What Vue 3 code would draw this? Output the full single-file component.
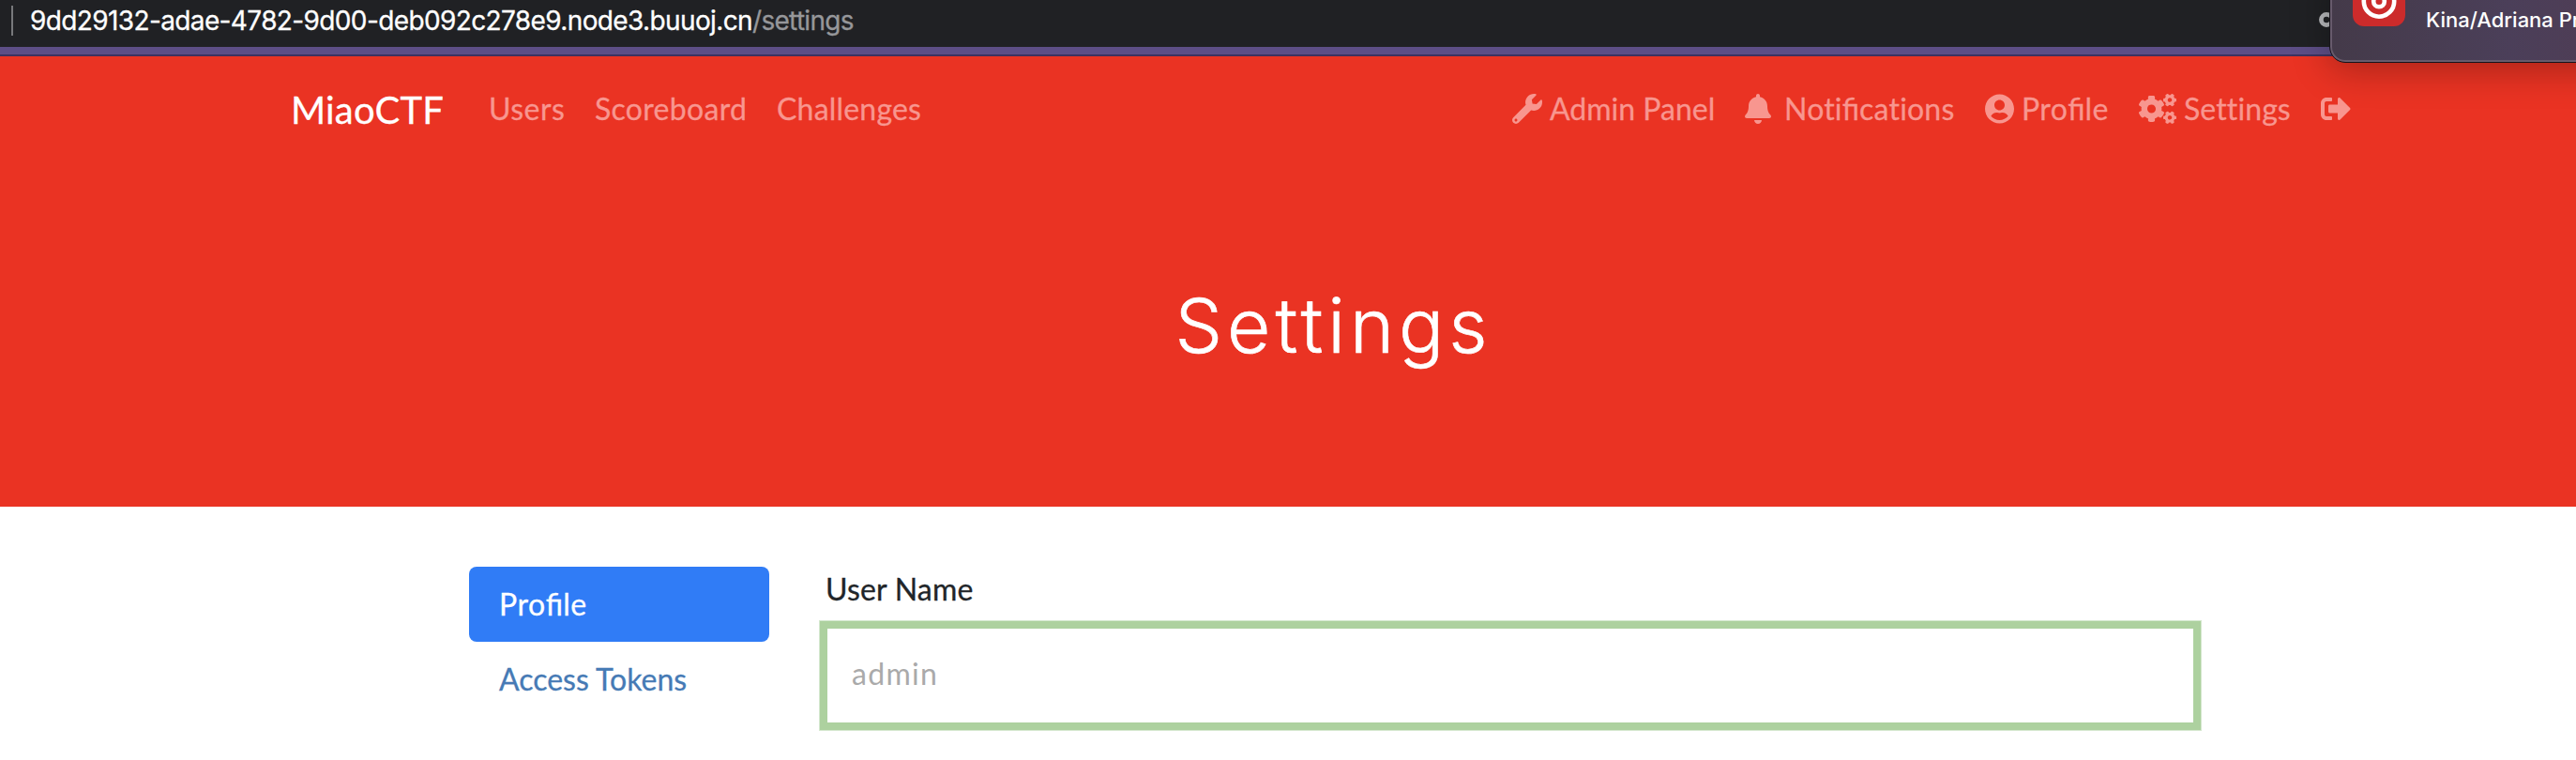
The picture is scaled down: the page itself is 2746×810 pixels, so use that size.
<script setup>
const leftLinks = ['Users', 'Scoreboard', 'Challenges']
</script>

<template>
  <div class="page">
    <div class="address">
      <span class="divider"></span>
      <span class="host">9dd29132-adae-4782-9d00-deb092c278e9.node3.buuoj.cn</span><span class="path">/settings</span>
      <svg class="key" width="30" height="30" viewBox="0 0 30 30"><circle cx="10" cy="10" r="5.600" fill="none" stroke="#b9babd" stroke-width="4.700" /></svg>
    </div>
    <div class="strip"></div>

    <header class="hero">
      <nav class="navbar">
        <a class="brand">MiaoCTF</a>
        <a v-for="l in leftLinks" :key="l" class="link" :class="l.toLowerCase()">{{ l }}</a>
        <span class="grow"></span>
        <a class="link admin">
          <svg width="32" height="32" viewBox="0 0 512 512"><path d="M507.73 109.1c-2.24-9.03-13.54-12.09-20.12-5.51l-74.36 74.36-67.88-11.31-11.31-67.88 74.36-74.36c6.62-6.62 3.43-17.9-5.66-20.16-47.38-11.74-99.55.91-136.58 37.93-39.64 39.64-50.55 97.1-34.05 147.2L18.74 402.76c-24.99 24.99-24.99 65.51 0 90.5 24.99 24.99 65.51 24.99 90.5 0l213.21-213.21c50.12 16.71 107.47 5.68 147.37-34.22 37.07-37.07 49.7-89.32 37.91-136.73zM64 472c-13.25 0-24-10.75-24-24 0-13.26 10.75-24 24-24s24 10.74 24 24c0 13.25-10.75 24-24 24z" /></svg>
          <span>Admin Panel</span>
        </a>
        <a class="link notifications">
          <svg width="28" height="32" viewBox="0 0 448 512"><path d="M224 512c35.32 0 63.97-28.65 63.97-64H160.03c0 35.35 28.65 64 63.97 64zm215.39-149.71c-19.32-20.76-55.47-51.99-55.47-154.29 0-77.7-54.48-139.9-127.94-155.16V32c0-17.67-14.32-32-31.98-32s-31.98 14.33-31.98 32v20.84C118.56 68.1 64.08 130.3 64.08 208c0 102.3-36.15 133.53-55.47 154.29-6 6.45-8.66 14.16-8.61 21.71.11 16.4 12.98 32 32.1 32h383.8c19.12 0 32-15.6 32.1-32 .05-7.55-2.61-15.27-8.61-21.71z" /></svg>
          <span>Noti<span class="lig">fi</span>cations</span>
        </a>
        <a class="link profile">
          <svg width="31" height="32" viewBox="0 0 496 512"><path d="M248 8C111 8 0 119 0 256s111 248 248 248 248-111 248-248S385 8 248 8zm0 96c48.6 0 88 39.4 88 88s-39.4 88-88 88-88-39.4-88-88 39.4-88 88-88zm0 344c-58.7 0-111.3-26.6-146.5-68.2 18.8-35.4 55.6-59.8 98.5-59.8 2.4 0 4.800.4 7.100 1.100 13 4.200 26.600 6.900 40.900 6.900 14.300 0 28-2.700 40.900-6.900 2.300-.7 4.700-1.100 7.100-1.100 42.900 0 79.700 24.400 98.500 59.800C359.300 421.400 306.700 448 248 448z" /></svg>
          <span>Pro<span class="lig">fi</span>le</span>
        </a>
        <a class="link settings">
          <svg width="40" height="32" viewBox="0 0 640 512"><path d="M512.1 191l-8.200 14.300c-3 5.300-9.400 7.500-15.100 5.400-11.800-4.400-22.600-10.700-32.100-18.600-4.600-3.800-5.800-10.500-2.800-15.700l8.200-14.300c-6.900-8-12.300-17.300-15.900-27.400h-16.500c-6 0-11.200-4.300-12.200-10.300-2-12-2.100-24.600 0-37.100 1-6 6.200-10.400 12.200-10.400h16.500c3.600-10.100 9-19.400 15.900-27.400l-8.200-14.300c-3-5.200-1.900-11.900 2.800-15.700 9.500-7.900 20.400-14.200 32.100-18.600 5.700-2.100 12.100.1 15.100 5.400l8.200 14.300c10.500-1.900 21.200-1.900 31.700 0L552 6.300c3-5.300 9.400-7.500 15.100-5.400 11.800 4.400 22.600 10.700 32.100 18.600 4.600 3.800 5.800 10.500 2.800 15.700l-8.200 14.300c6.900 8 12.300 17.300 15.900 27.400h16.500c6 0 11.200 4.300 12.200 10.300 2 12 2.100 24.600 0 37.100-1 6-6.200 10.400-12.200 10.400h-16.500c-3.600 10.100-9 19.400-15.900 27.400l8.200 14.300c3 5.200 1.900 11.900-2.800 15.700-9.500 7.900-20.400 14.200-32.100 18.600-5.700 2.100-12.100-.1-15.100-5.400l-8.200-14.300c-10.400 1.900-21.200 1.900-31.700 0zm-10.500-58.800c38.500 29.600 82.400-14.300 52.800-52.800-38.500-29.700-82.400 14.300-52.800 52.800zM386.300 286.100l33.700 16.800c10.100 5.800 14.500 18.100 10.500 29.100-8.900 24.200-26.400 46.400-42.600 65.800-7.400 8.900-20.200 11.100-30.300 5.300l-29.100-16.800c-16 13.700-34.600 24.600-54.900 31.700v33.600c0 11.600-8.300 21.600-19.700 23.600-24.600 4.200-50.400 4.400-75.900 0-11.500-2-20-11.900-20-23.600V418c-20.300-7.200-38.900-18-54.900-31.700L74 403c-10 5.800-22.900 3.600-30.300-5.300-16.200-19.400-33.300-41.600-42.200-65.700-4-10.900.4-23.200 10.500-29.100l33.300-16.800c-3.900-20.900-3.900-42.400 0-63.400L12 205.800c-10.100-5.800-14.600-18.100-10.500-29 8.900-24.200 26-46.400 42.200-65.800 7.400-8.900 20.200-11.100 30.300-5.300l29.100 16.800c16-13.700 34.600-24.600 54.900-31.700V57.100c0-11.500 8.200-21.500 19.600-23.500 24.600-4.200 50.500-4.400 76-.1 11.500 2 20 11.900 20 23.600v33.600c20.300 7.200 38.900 18 54.900 31.700l29.100-16.800c10-5.800 22.900-3.600 30.300 5.300 16.200 19.400 33.200 41.600 42.100 65.800 4 10.900.1 23.200-10 29.100l-33.700 16.800c3.900 21 3.900 42.500 0 63.500zm-117.600 21.100c59.200-77-28.700-164.900-105.700-105.700-59.200 77 28.700 164.900 105.700 105.700zm243.400 182.700l-8.200 14.300c-3 5.300-9.400 7.500-15.100 5.400-11.800-4.400-22.600-10.700-32.100-18.600-4.600-3.800-5.800-10.500-2.800-15.700l8.200-14.300c-6.900-8-12.300-17.300-15.900-27.400h-16.500c-6 0-11.200-4.300-12.200-10.300-2-12-2.100-24.600 0-37.100 1-6 6.200-10.400 12.200-10.400h16.500c3.600-10.100 9-19.400 15.900-27.400l-8.200-14.300c-3-5.200-1.900-11.900 2.800-15.700 9.500-7.900 20.400-14.200 32.100-18.600 5.700-2.100 12.100.1 15.100 5.400l8.200 14.300c10.500-1.900 21.200-1.900 31.700 0l8.200-14.300c3-5.300 9.400-7.500 15.100-5.400 11.800 4.400 22.600 10.700 32.100 18.600 4.600 3.800 5.800 10.500 2.800 15.700l-8.200 14.300c6.900 8 12.300 17.300 15.900 27.400h16.500c6 0 11.200 4.300 12.200 10.300 2 12 2.100 24.600 0 37.100-1 6-6.200 10.400-12.200 10.400h-16.500c-3.600 10.100-9 19.400-15.900 27.400l8.200 14.300c3 5.200 1.900 11.900-2.800 15.700-9.500 7.900-20.400 14.200-32.100 18.600-5.700 2.100-12.100-.1-15.100-5.400l-8.200-14.300c-10.400 1.900-21.200 1.900-31.700 0zM501.600 431c38.500 29.600 82.400-14.300 52.800-52.800-38.500-29.600-82.400 14.300-52.800 52.800z" /></svg>
          <span>Settings</span>
        </a>
        <a class="link logout">
          <svg width="32" height="32" viewBox="0 0 512 512"><path d="M497 273L329 441c-15 15-41 4.500-41-17v-96H152c-13.300 0-24-10.700-24-24v-96c0-13.300 10.700-24 24-24h136V88c0-21.400 25.900-32 41-17l168 168c9.300 9.400 9.300 24.600 0 34zM192 436v-40c0-6.600-5.400-12-12-12H96c-17.700 0-32-14.300-32-32V160c0-17.700 14.300-32 32-32h84c6.600 0 12-5.400 12-12V76c0-6.600-5.400-12-12-12H96c-53 0-96 43-96 96v192c0 53 43 96 96 96h84c6.600 0 12-5.400 12-12z" /></svg>
        </a>
      </nav>
      <h1>Settings</h1>
    </header>

    <main class="content">
      <aside class="pills">
        <a class="pill active">Pro<span class="lig">fi</span>le</a>
        <a class="pill tokens">Access Tokens</a>
      </aside>
      <form class="form">
        <label>User Name</label>
        <div class="field"><span>admin</span></div>
      </form>
    </main>

    <div class="toast">
      <svg class="app" width="56" height="40" viewBox="0 0 56 40">
        <rect x="0" y="-16" width="56" height="56" rx="12" fill="#cc2b2b" />
        <g fill="none" stroke="#fff" stroke-width="4.600"><circle cx="28" cy="13.500" r="16.200" /><circle cx="28" cy="13.500" r="5.800" /></g>
      </svg>
      <span class="msg">Kina/Adriana Pr</span>
    </div>
  </div>
</template>

<style>
body { margin: 0; background: #fff; }
</style>

<style scoped>
.page { position: relative; width: 2746px; height: 810px; overflow: hidden; background: #fff; font-family: Lato, sans-serif; font-size: 32px; line-height: 48px; letter-spacing: .2px; font-variant-ligatures: none; -webkit-text-stroke: .3px currentColor; }
.lig { font-variant-ligatures: normal; font-feature-settings: "liga" 1; letter-spacing: 0; }
.address { height: 50px; background: #202124; display: flex; align-items: flex-start; font-family: Inter, sans-serif; font-size: 28px; line-height: 44px; letter-spacing: -.62px; color: #fff; white-space: nowrap; }
.divider { width: 2px; height: 32px; margin: 6px 18px 0 12px; background: #77787b; }
.path { color: #96979a; letter-spacing: -.7px; }
.key { margin: 11px 0 0 auto; padding-right: 246px; box-sizing: content-box; }
.strip { height: 8px; background: #5d4e86; border-bottom: 2px solid #3d3260; }
.hero { height: 480px; background: #ea3323; display: flex; flex-direction: column; }
.navbar { display: flex; align-items: center; height: 112px; padding: 0 224px 0 310px; white-space: nowrap; }
.brand { width: 162px; color: #fff; font-size: 40px; line-height: 60px; margin-right: 32px; padding-top: 1px; }
.link { box-sizing: border-box; display: flex; align-items: center; color: #f8968f; padding: 0 16px; }
.link svg { display: block; flex: none; fill: currentColor; margin-right: 8px; }
.users { width: 114px; padding-left: 17px; letter-spacing: .5px; }
.scoreboard { width: 194px; letter-spacing: .3px; }
.admin { width: 248px; letter-spacing: 0; }
.notifications { width: 256px; letter-spacing: .2px; }
.profile { width: 164px; letter-spacing: .4px; }
.settings { width: 194px; letter-spacing: .1px; }
.logout { width: 64px; }
.notifications svg { margin-right: 14px; }
.profile svg { margin-right: 8px; }
.logout svg { margin-right: 0; }
.grow { flex: 1; }
h1 { margin: 120px 0 0 97px; text-align: center; color: #fff; font-family: Inter, sans-serif; font-weight: 300; font-size: 80px; line-height: 110px; letter-spacing: 5px; -webkit-text-stroke: .6px #fff; }
.content { display: flex; padding: 64px 399px 0 500px; }
.pills { width: 320px; margin-right: 53px; }
.pill { display: block; height: 48px; padding: 16px 32px; color: #467ab5; border-radius: 8px; }
.pill.active { color: #fff; background: #307cf6; letter-spacing: .6px; }
.tokens { letter-spacing: 0; }
.form { flex: 1; color: #212529; }
label { display: block; padding-left: 7px; height: 57px; line-height: 48px; }
.field { box-sizing: border-box; height: 118px; border: 1px solid #d5e8cf; box-shadow: inset 0 0 0 8px #add19f; padding: 32px 34px; line-height: 48px; color: #aaa; letter-spacing: 1.300px; -webkit-text-stroke: 0; }
.toast { position: absolute; left: 2483px; top: -40px; width: 320px; height: 107px; box-sizing: border-box; border: 1px solid #18141b; border-radius: 17px; background: linear-gradient(90deg, #443a49, #4b3f59 60%, #503c54); box-shadow: inset 0 0 0 2px #675b6c, 0 6px 40px rgba(0,0,0,.3); -webkit-text-stroke: 0; }
.app { position: absolute; left: 24px; top: 27px; }
.msg { position: absolute; left: 102px; top: 47px; color: #fff; font: 500 22px/26px Inter, sans-serif; letter-spacing: 0; white-space: nowrap; }
</style>
